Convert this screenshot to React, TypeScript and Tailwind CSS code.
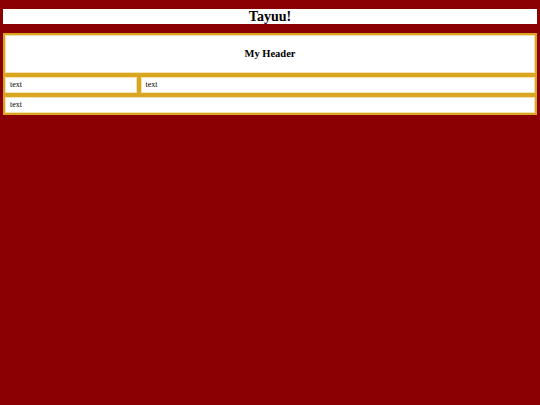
export default function App() {
  return (
    <div className="min-h-[405px] bg-[#8b0000] px-[3px] pt-[9px] font-['Liberation_Serif',serif] text-black">
      <h1 className="flex h-[15px] items-center justify-center bg-white text-[14px] font-bold leading-none">
        Tayuu!
      </h1>

      <div className="mt-[9px] grid grid-cols-[1fr_3fr] gap-[4px] bg-[#daa520] p-[2px]">
        <div className="col-span-2 flex h-[38px] items-center justify-center border border-[#f3e3b0] bg-white text-[10.5px] font-bold">
          My Header
        </div>
        <div className="flex h-[16px] items-center border border-[#f3e3b0] bg-white px-[4px] text-[8px]">
          text
        </div>
        <div className="flex h-[16px] items-center border border-[#f3e3b0] bg-white px-[4px] text-[8px]">
          text
        </div>
        <div className="col-span-2 flex h-[16px] items-center border border-[#f3e3b0] bg-white px-[4px] text-[8px]">
          text
        </div>
      </div>
    </div>
  );
}
